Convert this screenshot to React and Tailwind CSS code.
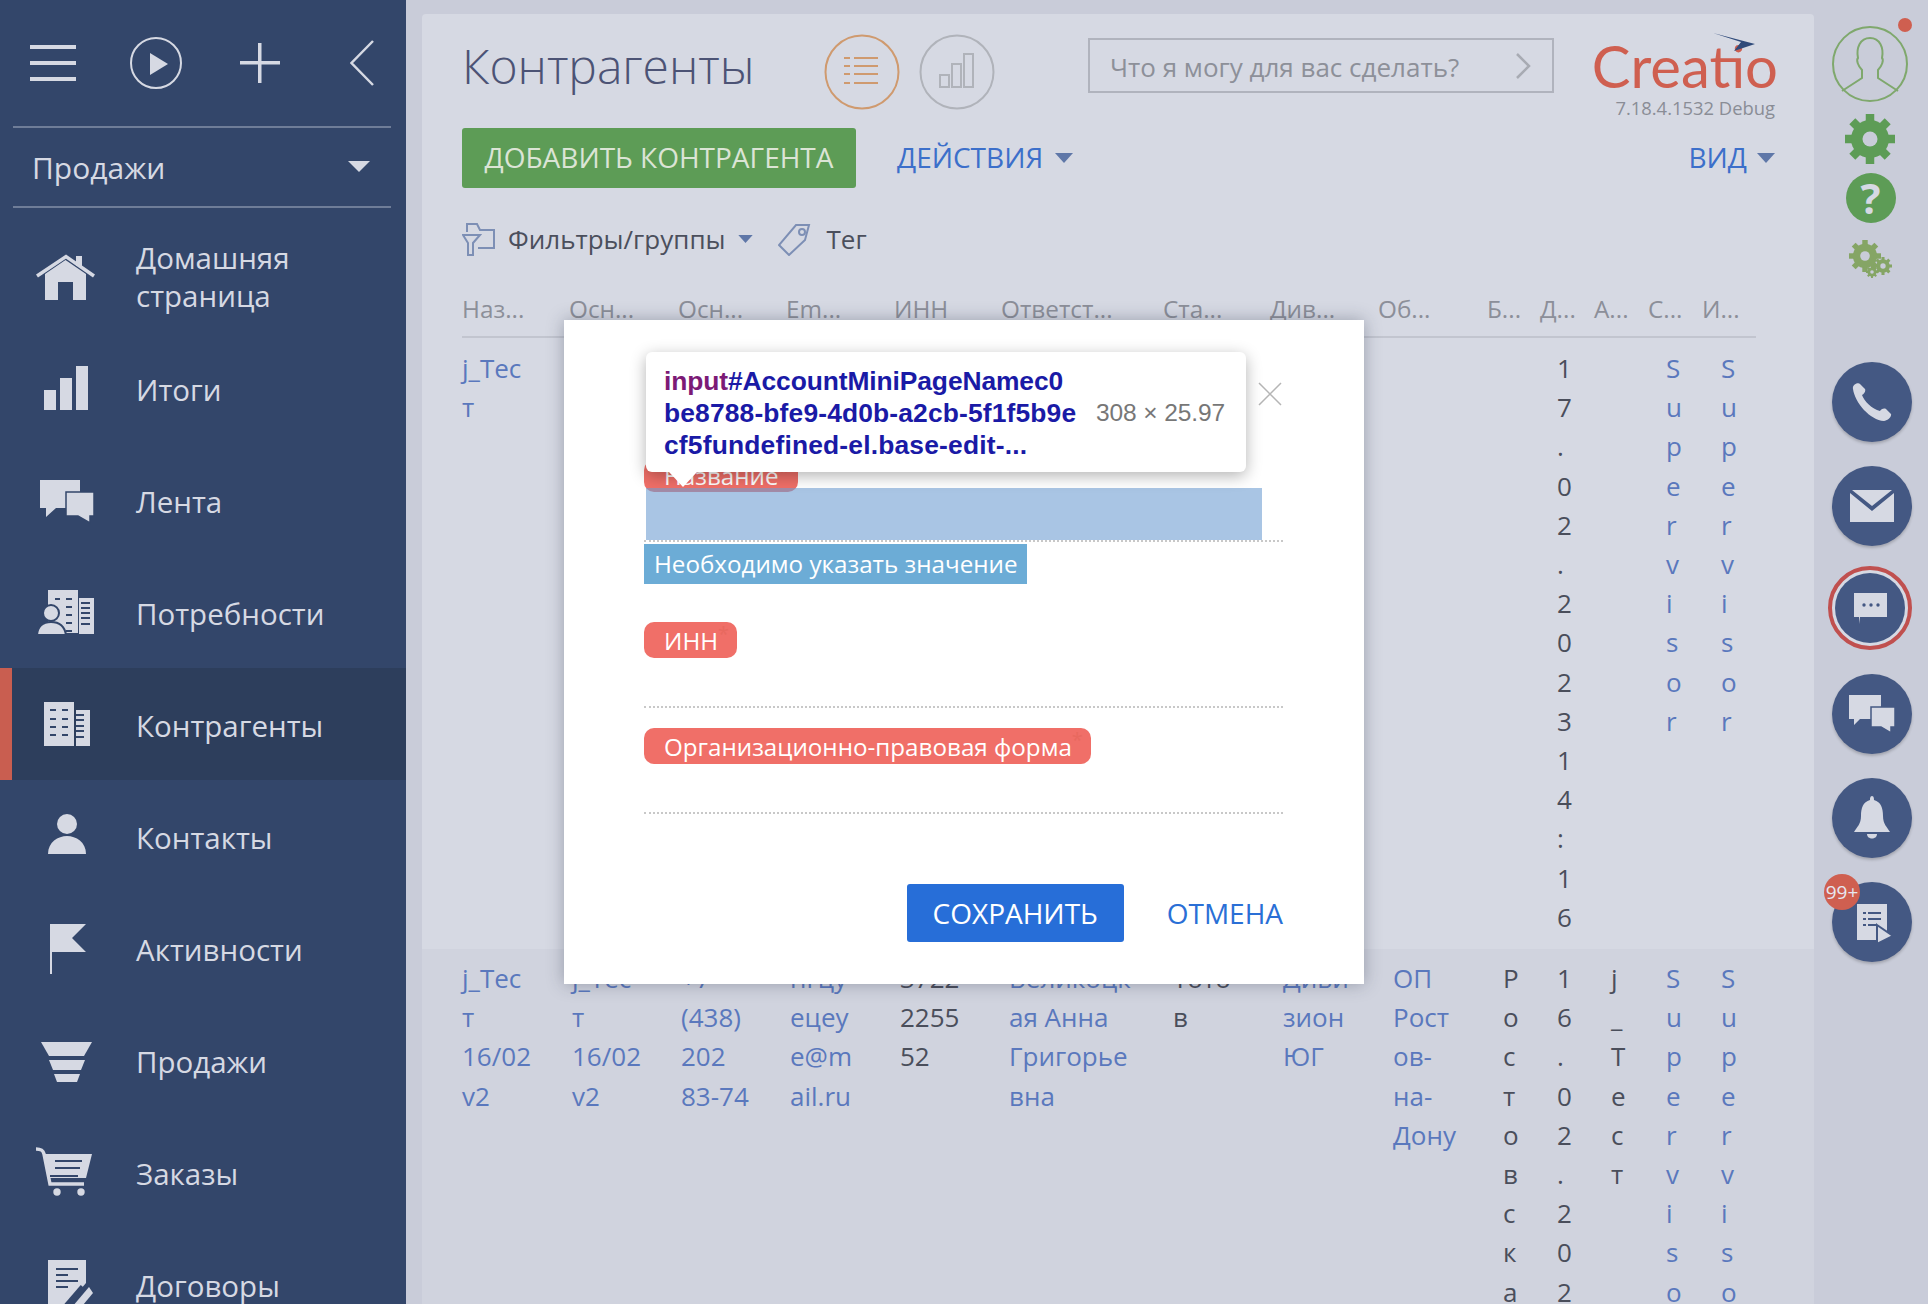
import React from "react";

const LIGHT = "#d6d9e3";
const NAVY = "#33466a";

const Icon = ({ children, dy = 0 }) => (
  <svg width="70" height="70" viewBox="0 0 70 70" className="ml-[31px] mr-[35px] shrink-0" fill={LIGHT}>
    <g transform={`translate(0 ${dy})`}>{children}</g>
  </svg>
);

const HomeIcon = () => (
  <Icon>
    <path d="M14 33L34.5 19L55 33V59H42V41H27V59H14Z" />
    <rect x="45" y="15" width="6" height="10" />
    <polyline points="6,35 35,15.5 63,35" fill="none" stroke={LIGHT} strokeWidth="3.5" />
  </Icon>
);
const BarsIcon = () => (
  <Icon dy={2}>
    <rect x="13" y="35" width="12" height="20" />
    <rect x="29" y="23" width="12" height="32" />
    <rect x="45" y="11" width="12" height="44" />
  </Icon>
);
const FeedIcon = () => (
  <Icon dy={2}>
    <path d="M9 13H49V41H25L15 50V41H9Z" />
    <path d="M35 25H63V49H59V56L47 49H35Z" stroke={NAVY} strokeWidth="1.5" />
  </Icon>
);
const NeedsIcon = () => (
  <Icon dy={2}>
    <rect x="17" y="11" width="30" height="43" />
    <rect x="48" y="19" width="15" height="36" />
    <g stroke={NAVY} strokeWidth="2">
      {[17, 25, 33, 41, 49].map((y) => (
        <line key={y} x1="35" x2="41" y1={y + 3} y2={y + 3} />
      ))}
      {[24, 29, 34, 39, 45].map((y) => (
        <line key={y} x1="50" x2="59" y1={y} y2={y} />
      ))}
      <line x1="24" x2="29" y1="20" y2="20" />
    </g>
    <circle cx="20" cy="34" r="8" stroke={NAVY} strokeWidth="2" />
    <path d="M6 56Q7 43 20 43Q33 43 35 56Z" stroke={NAVY} strokeWidth="2" />
  </Icon>
);
const AccountsIcon = () => (
  <Icon>
    <rect x="13" y="13" width="30" height="44" />
    <rect x="45" y="21" width="14" height="36" />
    <g stroke={NAVY} strokeWidth="2">
      {[21, 30, 38, 46].map((y) => (
        <g key={y}>
          <line x1="19" x2="25" y1={y} y2={y} />
          <line x1="31" x2="37" y1={y} y2={y} />
        </g>
      ))}
      {[26, 31, 37, 42, 48].map((y) => (
        <line key={y} x1="45" x2="53" y1={y} y2={y} />
      ))}
    </g>
  </Icon>
);
const ContactIcon = () => (
  <Icon>
    <circle cx="36" cy="23" r="10" />
    <path d="M17 53C17 41 27 35 36 35C45 35 55 41 55 53Z" />
  </Icon>
);
const FlagIcon = () => (
  <Icon>
    <path d="M19 11H55L41 25L55 39H21V61H19Z" />
  </Icon>
);
const FunnelIcon = () => (
  <Icon>
    <polygon points="10,17 61,17 53,31 18,31" />
    <polygon points="18,35 54,35 50,45 22,45" />
    <polygon points="23,49 49,49 46,57 26,57" />
  </Icon>
);
const CartIcon = () => (
  <Icon>
    <polygon points="13,17 61,17 55,41 18,41" />
    <path d="M5 12C10 12 12 13 13 17L19 47H53" fill="none" stroke={LIGHT} strokeWidth="3.5" />
    <g stroke={NAVY} strokeWidth="2">
      <line x1="24" x2="51" y1="24" y2="24" />
      <line x1="24" x2="49" y1="31" y2="31" />
      <line x1="19" x2="47" y1="39" y2="39" />
    </g>
    <circle cx="26" cy="55" r="3.7" />
    <circle cx="50" cy="55" r="3.7" />
  </Icon>
);
const ContractIcon = () => (
  <Icon>
    <path d="M17 11H55V34L33 60H17Z" />
    <g stroke={NAVY} strokeWidth="2">
      <line x1="25" x2="47" y1="20" y2="20" />
      <line x1="25" x2="37" y1="26" y2="26" />
      <line x1="25" x2="47" y1="32" y2="32" />
      <line x1="25" x2="37" y1="38" y2="38" />
    </g>
    <path d="M33 60L52 38" stroke={NAVY} strokeWidth="6" />
    <path d="M36 64L58 38L62 44L42 68Z" />
  </Icon>
);

const navItems = [
  { label: "Домашняя\nстраница", icon: HomeIcon, twoLines: true },
  { label: "Итоги", icon: BarsIcon },
  { label: "Лента", icon: FeedIcon },
  { label: "Потребности", icon: NeedsIcon },
  { label: "Контрагенты", icon: AccountsIcon, active: true },
  { label: "Контакты", icon: ContactIcon },
  { label: "Активности", icon: FlagIcon },
  { label: "Продажи", icon: FunnelIcon },
  { label: "Заказы", icon: CartIcon },
  { label: "Договоры", icon: ContractIcon },
];

const Sidebar = () => (
  <aside className="w-[406px] h-[1304px] shrink-0 overflow-hidden bg-[#33466a] text-[#d6d9e3]">
    <div className="h-[126px] flex items-center pb-[1px]">
      <svg width="46" height="36" className="ml-[30px]" fill={LIGHT}>
        <rect width="46" height="4" />
        <rect y="16" width="46" height="4" />
        <rect y="32" width="46" height="4" />
      </svg>
      <svg width="52" height="52" className="ml-[54px]">
        <circle cx="26" cy="26" r="25" fill="none" stroke={LIGHT} strokeWidth="2" />
        <polygon points="20,16 38,27 20,38" fill={LIGHT} />
      </svg>
      <svg width="40" height="40" className="ml-[58px]" fill={LIGHT}>
        <rect y="18" width="40" height="3.5" />
        <rect x="18" width="3.5" height="40" />
      </svg>
      <svg width="24" height="46" className="ml-[70px]">
        <polyline points="23,1 1.5,23 23,45" fill="none" stroke={LIGHT} strokeWidth="2.5" />
      </svg>
    </div>
    <div className="ml-[13px] mr-[15px] h-[2px] bg-[#6f7d98]" />
    <div className="h-[78px] flex items-center justify-between pl-[32px] pr-[36px] text-[30px]">
      <span>Продажи</span>
      <svg width="22" height="12" fill={LIGHT}>
        <polygon points="0,0 22,0 11,11" />
      </svg>
    </div>
    <div className="ml-[13px] mr-[15px] h-[2px] bg-[#6f7d98]" />
    <nav className="pt-[12px]">
      {navItems.map((item) => (
        <div
          key={item.label}
          className={
            item.active
              ? "h-[112px] flex items-center bg-[#2d3e5c] relative"
              : "h-[112px] flex items-center"
          }
        >
          {item.active && <div className="absolute left-0 top-0 bottom-0 w-[12px] bg-[#c95e50]" />}
          <item.icon />
          <span
            className={
              item.twoLines
                ? "whitespace-pre-line text-[29.5px] leading-[38px] mt-[1px]"
                : "whitespace-pre-line text-[29.5px] leading-[38px] mt-[3px]"
            }
          >
            {item.label}
          </span>
        </div>
      ))}
    </nav>
  </aside>
);

const Caret = ({ className }) => (
  <svg viewBox="0 0 18 10" className={className} fill="#5f77a8">
    <polygon points="0,0 18,0 9,10" />
  </svg>
);

const headers = [
  ["Наз...", "w-[107px]"],
  ["Осн...", "w-[109px]"],
  ["Осн...", "w-[108px]"],
  ["Em...", "w-[108px]"],
  ["ИНН", "w-[107px]"],
  ["Ответст...", "w-[162px]"],
  ["Ста...", "w-[107px]"],
  ["Див...", "w-[108px]"],
  ["Об...", "w-[109px]"],
  ["Б...", "w-[53px]"],
  ["Д...", "w-[54px]"],
  ["А...", "w-[54px]"],
  ["С...", "w-[54px]"],
  ["И...", "w-[54px]"],
];

const each = (s) => s.split("").join("\n");
const dataCols =
  "grid grid-cols-[110px_109px_109px_110px_109px_164px_110px_110px_110px_54px_54px_55px_55px_55px]";

const LINK = "text-[#5a78bd] whitespace-pre-line";
const DARK = "text-[#4a4e5b] whitespace-pre-line";

const rowOne = [
  [LINK, "j_Тес\nт"],
  [DARK, ""],
  [DARK, ""],
  [DARK, ""],
  [DARK, ""],
  [DARK, ""],
  [DARK, ""],
  [DARK, ""],
  [DARK, ""],
  [DARK, ""],
  [DARK, each("17.02.2023") + "\n" + each("14:16")],
  [DARK, ""],
  [LINK, each("Supervisor")],
  [LINK, each("Supervisor")],
];

const rowTwo = [
  [LINK, "j_Тес\nт\n16/02\nv2"],
  [LINK, "j_Тес\nт\n16/02\nv2"],
  [LINK, "+7\n(438)\n202\n83-74"],
  [LINK, "нгцу\nецеу\ne@m\nail.ru"],
  [DARK, "3722\n2255\n52"],
  [LINK, "Великоцк\nая Анна\nГригорье\nвна"],
  [DARK, "Тото\nв"],
  [LINK, "Диви\nзион\nЮГ"],
  [LINK, "ОП\nРост\nов-\nна-\nДону"],
  [DARK, each("Ростовская")],
  [DARK, each("16.02.2023") + "\n" + each("14:16")],
  [DARK, each("j_Тест")],
  [LINK, each("Supervisor")],
  [LINK, each("Supervisor")],
];

const Row = ({ cells, className }) => (
  <div className={`${dataCols} text-[26px] leading-[39.2px] ${className}`}>
    {cells.map(([color, text], i) => (
      <div key={i} className={color}>
        {text}
      </div>
    ))}
  </div>
);

const Cog = ({ cx, cy, r, color }) => (
  <g>
    {[0, 45, 90, 135].map((a) => (
      <rect
        key={a}
        x={cx - r * 0.17}
        y={cy - r}
        width={r * 0.34}
        height={r * 2}
        fill={color}
        transform={`rotate(${a} ${cx} ${cy})`}
      />
    ))}
    <circle cx={cx} cy={cy} r={r * 0.76} fill={color} />
    <circle cx={cx} cy={cy} r={r * 0.3} fill="#c9ccd9" />
  </g>
);

const Main = () => (
  <main className="mt-[14px] ml-[16px] w-[1392px] h-[1290px] shrink-0 overflow-hidden rounded-t-[4px] bg-[#d6d9e3] font-normal">
    <div className="h-[94px] mt-[20px] pl-[40px] flex items-start relative">
      <h1 className="w-[362px] -mt-[2px] text-[48px] leading-[68px] font-light text-[#4c5375]">Контрагенты</h1>
      <svg width="76" height="76">
        <circle cx="38" cy="38" r="36.5" fill="none" stroke="#cf9a6f" strokeWidth="2" />
        <g stroke="#cf9a6f" strokeWidth="2">
          {[24, 32, 40, 49].map((y) => (
            <g key={y}>
              <line x1="20" x2="26" y1={y} y2={y} />
              <line x1="30" x2="54" y1={y} y2={y} />
            </g>
          ))}
        </g>
      </svg>
      <svg width="76" height="76" className="ml-[19px]" fill="none" stroke="#b0b3ba" strokeWidth="2">
        <circle cx="38" cy="38" r="36.5" />
        <rect x="21" y="41" width="9" height="12" />
        <rect x="33" y="30" width="9" height="23" />
        <rect x="45" y="20" width="9" height="33" />
      </svg>
      <div className="ml-[93px] mt-[4px] w-[466px] h-[55px] border-2 border-[#b0b3bd] flex items-center justify-between pl-[20px] pr-[21px] text-[26px] text-[#8d9099]">
        <span className="mt-[3px]">Что я могу для вас сделать?</span>
        <svg width="16" height="26" fill="none" stroke="#a8abb3" strokeWidth="2.5">
          <polyline points="2,1 14,13 2,25" />
        </svg>
      </div>
      <div className="ml-[40px] flex flex-col items-end w-[184px] relative">
        <span className="font-['Lato',sans-serif] text-[#cf5f50] text-[58px] leading-[64px] font-normal h-[62px] whitespace-nowrap">
          Creatio
        </span>
        <svg width="44" height="20" className="absolute left-[118px] top-[-1px]" fill="#2f4a7a">
          <polygon points="1,0 43,11 22,18 29,9" />
        </svg>
        <span className="text-[18.4px] leading-[24px] text-[#8a8d96] mr-[3px]">7.18.4.1532 Debug</span>
      </div>
    </div>
    <div className="h-[60px] pl-[40px] pr-[39px] flex items-center">
      <div className="h-[60px] w-[394px] flex items-center justify-center rounded-[3px] bg-[#5d9c56] text-[#dbe4d5] text-[28px] pb-[2px]">
        ДОБАВИТЬ КОНТРАГЕНТА
      </div>
      <span className="ml-[41px] -mt-[2px] text-[#3c6fca] text-[28px]">ДЕЙСТВИЯ</span>
      <Caret className="ml-[12px] w-[18px] h-[10px]" />
      <span className="ml-auto -mt-[2px] text-[#3c6fca] text-[28px]">ВИД</span>
      <Caret className="ml-[10px] w-[18px] h-[10px]" />
    </div>
    <div className="mt-[35px] h-[32px] pl-[40px] flex items-center text-[26px] text-[#4b4f5c]">
      <svg width="33" height="33" fill="none" stroke="#7d8fb5" strokeWidth="2">
        <path d="M5 9V1H15L18 7H32V25H16" />
        <path d="M1 12H18L11 20V32H6V20Z" />
      </svg>
      <span className="ml-[13px]">Фильтры/группы</span>
      <Caret className="ml-[13px] w-[15px] h-[8px]" />
      <svg width="33" height="33" className="ml-[25px]" fill="none" stroke="#7d8fb5" strokeWidth="2">
        <path d="M31 2H18L1 22L11 32L27 17Z" />
        <circle cx="24" cy="9" r="3" />
      </svg>
      <span className="ml-[15px]">Тег</span>
    </div>
    <div className="mt-[35px] mx-[40px] w-[1294px] h-[48px] border-b-2 border-[#c2c5cf] flex text-[24.3px] leading-[38px] text-[#8c8f99]">
      {headers.map(([label, width], i) => (
        <div key={i} className={`${width} shrink-0`}>
          {label}
        </div>
      ))}
    </div>
    <Row cells={rowOne} className="pl-[40px] pt-[11px] pb-[12px]" />
    <Row cells={rowTwo} className="pl-[40px] pt-[10px] bg-[#d0d3de]" />
  </main>
);

const RoundButton = ({ children, className = "" }) => (
  <div
    className={`w-[80px] h-[80px] ml-[4px] rounded-full bg-[#445883] shadow-[0_2px_3px_rgba(0,0,0,0.2)] flex items-center justify-center relative ${className}`}
  >
    {children}
  </div>
);

const Rail = () => (
  <div className="w-[114px] shrink-0 pr-[2px] flex flex-col items-center">
    <svg width="80" height="84" className="mt-[18px] ml-[4px]" fill="none" stroke="#7fa86d" strokeWidth="2">
      <circle cx="38" cy="46" r="37" />
      <path d="M10 73L30 60V52C26 48 24 42 26 40C24 30 28 20 38 20C48 20 52 30 50 40C52 42 50 48 46 52V60L66 73" />
      <circle cx="73" cy="7" r="7" fill="#cf5f50" stroke="none" />
    </svg>
    <svg width="52" height="52" className="mt-[11px]">
      <Cog cx={26} cy={26} r={25} color="#5d9c56" />
    </svg>
    <div className="mt-[8px] ml-[1px] w-[50px] h-[50px] rounded-full bg-[#5d9c56] flex items-center justify-center text-[#d6d9e3] text-[42px] font-bold leading-[50px]">
      ?
    </div>
    <svg width="50" height="40" className="mt-[15px]">
      <Cog cx={20} cy={18} r={16} color="#85a565" />
      <Cog cx={38} cy={28} r={9} color="#85a565" />
      <Cog cx={27} cy={34} r={6} color="#85a565" />
    </svg>
    <RoundButton className="mt-[84px]">
      <svg width="42" height="38" viewBox="0 0 42 38" fill={LIGHT}>
        <path d="M2 6C1 2 7 -1 9 1L14 6C15 8 13 11 11 12C13 18 21 26 29 28C30 26 33 25 35 26L40 31C41 34 36 38 33 38C19 37 4 20 2 6Z" />
      </svg>
    </RoundButton>
    <RoundButton className="mt-[24px]">
      <svg width="44" height="32" fill={LIGHT}>
        <polygon points="2,0 42,0 22,16" />
        <polygon points="0,3 22,21 44,3 44,32 0,32" />
      </svg>
    </RoundButton>
    <div className="mt-[20px] w-[84px] h-[84px] p-[3px] rounded-full border-[4px] border-[#c0504f] bg-[#d6d9e3]">
      <div className="w-full h-full rounded-full bg-[#445883] flex items-center justify-center">
        <svg width="33" height="31" fill={LIGHT}>
          <path d="M0 0H33V24H6L5 31V24H0Z" />
          <circle cx="10" cy="12" r="1.7" fill="#445883" />
          <circle cx="17" cy="12" r="1.7" fill="#445883" />
          <circle cx="24" cy="12" r="1.7" fill="#445883" />
        </svg>
      </div>
    </div>
    <RoundButton className="mt-[24px]">
      <svg width="46" height="38" fill={LIGHT}>
        <path d="M0 0H32V24H11L5 30V24H0Z" />
        <path d="M22 12H46V32H42V38L32 32H22Z" stroke="#445883" strokeWidth="1.5" />
      </svg>
    </RoundButton>
    <RoundButton className="mt-[24px]">
      <svg width="36" height="44" fill={LIGHT}>
        <path d="M18 0C20 0 20 3 20 4C27 6 29 12 29 20C29 28 33 31 36 36H0C3 31 7 28 7 20C7 12 9 6 16 4C16 3 16 0 18 0Z" />
        <path d="M13 38H23C23 44 13 44 13 38Z" />
      </svg>
    </RoundButton>
    <RoundButton className="mt-[24px]">
      <span className="absolute left-[-8px] top-[-8px] w-[36px] h-[36px] rounded-full bg-[#cf5f50] text-[#e6e8f0] text-[19px] leading-[36px] text-center whitespace-nowrap">
        99+
      </span>
      <svg width="36" height="40" className="ml-[6px] mt-[3px]" fill={LIGHT}>
        <rect width="30" height="36" />
        <g stroke="#445883" strokeWidth="2">
          <line x1="6" x2="9" y1="9" y2="9" />
          <line x1="11" x2="24" y1="9" y2="9" />
          <line x1="6" x2="9" y1="15" y2="15" />
          <line x1="11" x2="24" y1="15" y2="15" />
          <line x1="6" x2="9" y1="21" y2="21" />
          <line x1="11" x2="20" y1="21" y2="21" />
        </g>
        <polygon points="20,21 36,32 20,40" stroke="#445883" strokeWidth="2" />
      </svg>
    </RoundButton>
  </div>
);

const Pill = ({ label, className = "" }) => (
  <div className={`flex w-fit rounded-[10px] bg-[#f06f68] pl-[20px] pr-[8px] text-white text-[24.2px] ${className}`}>
    <span>{label}</span>
    <span className="text-[#e8695f] text-[20px] leading-[24px]">*</span>
  </div>
);

const Modal = () => (
  <div className="absolute left-[564px] top-[320px] w-[800px] h-[664px] bg-white shadow-[0_0_16px_rgba(40,50,70,0.35)] pt-[140px] pl-[80px] pr-[81px]">
    <Pill label="Название" className="h-[32px] leading-[32px]" />
    <div className="-mt-[4px] h-[54px] border-b-2 border-dotted border-[#c8c8c8] pl-[2px]">
      <div className="h-[52px] w-[616px] bg-[#6f9fd2]/60" />
    </div>
    <div className="mt-[2px] h-[40px] w-[383px] bg-[#6cacd6] pl-[10px] text-white text-[24.2px] leading-[40px]">
      Необходимо указать значение
    </div>
    <Pill label="ИНН" className="mt-[38px] h-[36px] leading-[38px]" />
    <div className="h-[50px] border-b-2 border-dotted border-[#c8c8c8]" />
    <Pill label="Организационно-правовая форма" className="mt-[20px] h-[36px] leading-[38px]" />
    <div className="h-[50px] border-b-2 border-dotted border-[#c8c8c8]" />
    <div className="mt-[70px] flex justify-end items-center">
      <div className="h-[58px] w-[217px] rounded-[3px] bg-[#276ed8] flex items-center justify-center text-white text-[28px]">
        СОХРАНИТЬ
      </div>
      <span className="ml-[43px] text-[#2a6fd6] text-[28px]">ОТМЕНА</span>
    </div>
    <svg width="24" height="24" className="absolute left-[694px] top-[62px]" fill="none" stroke="#b5b5b5" strokeWidth="1.5">
      <path d="M1 1L23 23M23 1L1 23" />
    </svg>
    <div className="absolute left-[82px] top-[32px] w-[600px] h-[120px] rounded-[6px] bg-white shadow-[0_4px_16px_rgba(0,0,0,0.3)] pl-[18px] pt-[13px] font-['Liberation_Sans',sans-serif] text-[26.4px] leading-[32px] font-bold tracking-[-0.1px] text-[#1a1aa6]">
      <div>
        <span className="text-[#7c1a76]">input</span>#AccountMiniPageNamec0
      </div>
      <div className="flex">
        <span className="w-[432px] shrink-0 whitespace-nowrap tracking-[0.15px]">be8788-bfe9-4d0b-a2cb-5f1f5b9e</span>
        <span className="font-normal text-[24.5px] text-[#777777]">308 × 25.97</span>
      </div>
      <div className="tracking-[0.18px]">cf5fundefined-el.base-edit-...</div>
      <svg width="30" height="16" className="absolute left-[22px] top-[120px]" fill="white">
        <polygon points="1,0 29,0 15,15" />
      </svg>
    </div>
  </div>
);

export default function App() {
  return (
    <div className="relative flex w-[1928px] h-[1304px] overflow-hidden bg-[#c9ccd9] font-['Open_Sans',sans-serif]">
      <Sidebar />
      <Main />
      <Rail />
      <Modal />
    </div>
  );
}
